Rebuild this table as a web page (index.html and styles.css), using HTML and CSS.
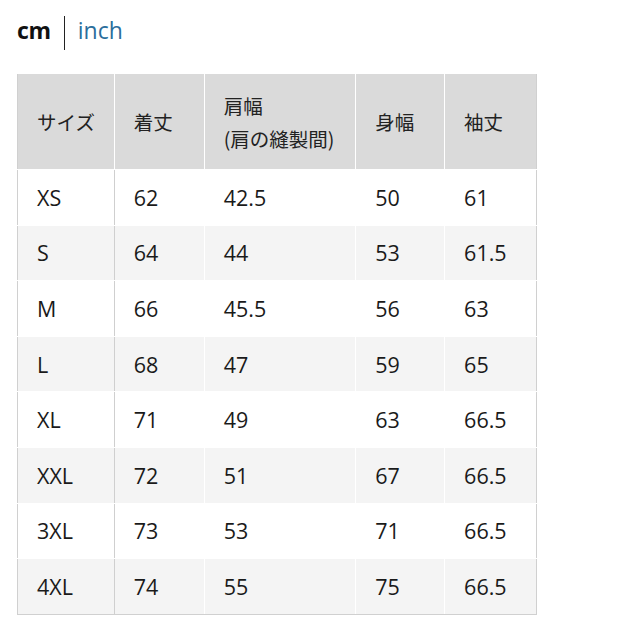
FILE: index.html
```html
<!DOCTYPE html>
<html lang="ja">
<head>
<meta charset="utf-8">
<link rel="stylesheet" href="styles.css">
</head>
<body>
<div class="units">
  <span class="unit active">cm</span>
  <span class="sep"></span>
  <span class="unit link">inch</span>
</div>
<table class="size">
  <colgroup>
    <col class="c1"><col class="c2"><col class="c3"><col class="c4"><col class="c5">
  </colgroup>
  <thead>
    <tr><th>サイズ</th><th>着丈</th><th>肩幅<br>(肩の縫製間)</th><th>身幅</th><th>袖丈</th></tr>
  </thead>
  <tbody>
    <tr><td>XS</td><td>62</td><td>42.5</td><td>50</td><td>61</td></tr>
    <tr><td>S</td><td>64</td><td>44</td><td>53</td><td>61.5</td></tr>
    <tr><td>M</td><td>66</td><td>45.5</td><td>56</td><td>63</td></tr>
    <tr><td>L</td><td>68</td><td>47</td><td>59</td><td>65</td></tr>
    <tr><td>XL</td><td>71</td><td>49</td><td>63</td><td>66.5</td></tr>
    <tr><td>XXL</td><td>72</td><td>51</td><td>67</td><td>66.5</td></tr>
    <tr><td>3XL</td><td>73</td><td>53</td><td>71</td><td>66.5</td></tr>
    <tr><td>4XL</td><td>74</td><td>55</td><td>75</td><td>66.5</td></tr>
  </tbody>
</table>
</body>
</html>
```
FILE: styles.css
```css
html, body {
  margin: 0;
  padding: 0;
  background: #fff;
}
body {
  font-family: "Open Sans", "Noto Sans CJK JP", sans-serif;
  color: #1a1a1a;
  padding: 16px 0 0 17px;
}
.units {
  display: flex;
  align-items: center;
  height: 34px;
  margin-bottom: 24px;
}
.unit {
  font-size: 23px;
  line-height: 30px;
  padding-bottom: 6px;
}
.active {
  font-weight: 700;
  color: #111;
  letter-spacing: -0.3px;
}
.sep {
  width: 1px;
  height: 34px;
  background: #222;
  margin: 0 13px 0 13px;
}
.link {
  color: #2b6e9c;
}
.size {
  border-collapse: collapse;
  width: 520px;
  border: 1px solid #d0d0d0;
  border-top: none;
  font-size: 21.5px;
}
.c1 { width: 97px; }
.c2 { width: 90px; }
.c3 { width: 152px; }
.c4 { width: 89px; }
.c5 { width: 92px; }
th, td {
  text-align: left;
  vertical-align: middle;
  padding: 0 0 0 19px;
  border: 1px solid #fff;
  font-weight: 400;
}
th {
  background: #dadada;
  height: 95px;
  line-height: 33px;
  font-family: "Noto Sans CJK JP", sans-serif;
  font-size: 19.5px;
  color: #222;
  border-top: none;
}
th:first-child, td:first-child {
  border-left: 1px solid #d0d0d0;
}
td:first-child {
  border-right: 1px solid #cfcfcf;
}
td {
  height: 54.6px;
  color: #1a1a1a;
}
tbody tr:nth-child(even) td {
  background: #f4f4f4;
}
tbody tr:last-child td {
  border-bottom: 1px solid #d0d0d0;
}
th:last-child, td:last-child {
  border-right: 1px solid #d0d0d0;
}
```
